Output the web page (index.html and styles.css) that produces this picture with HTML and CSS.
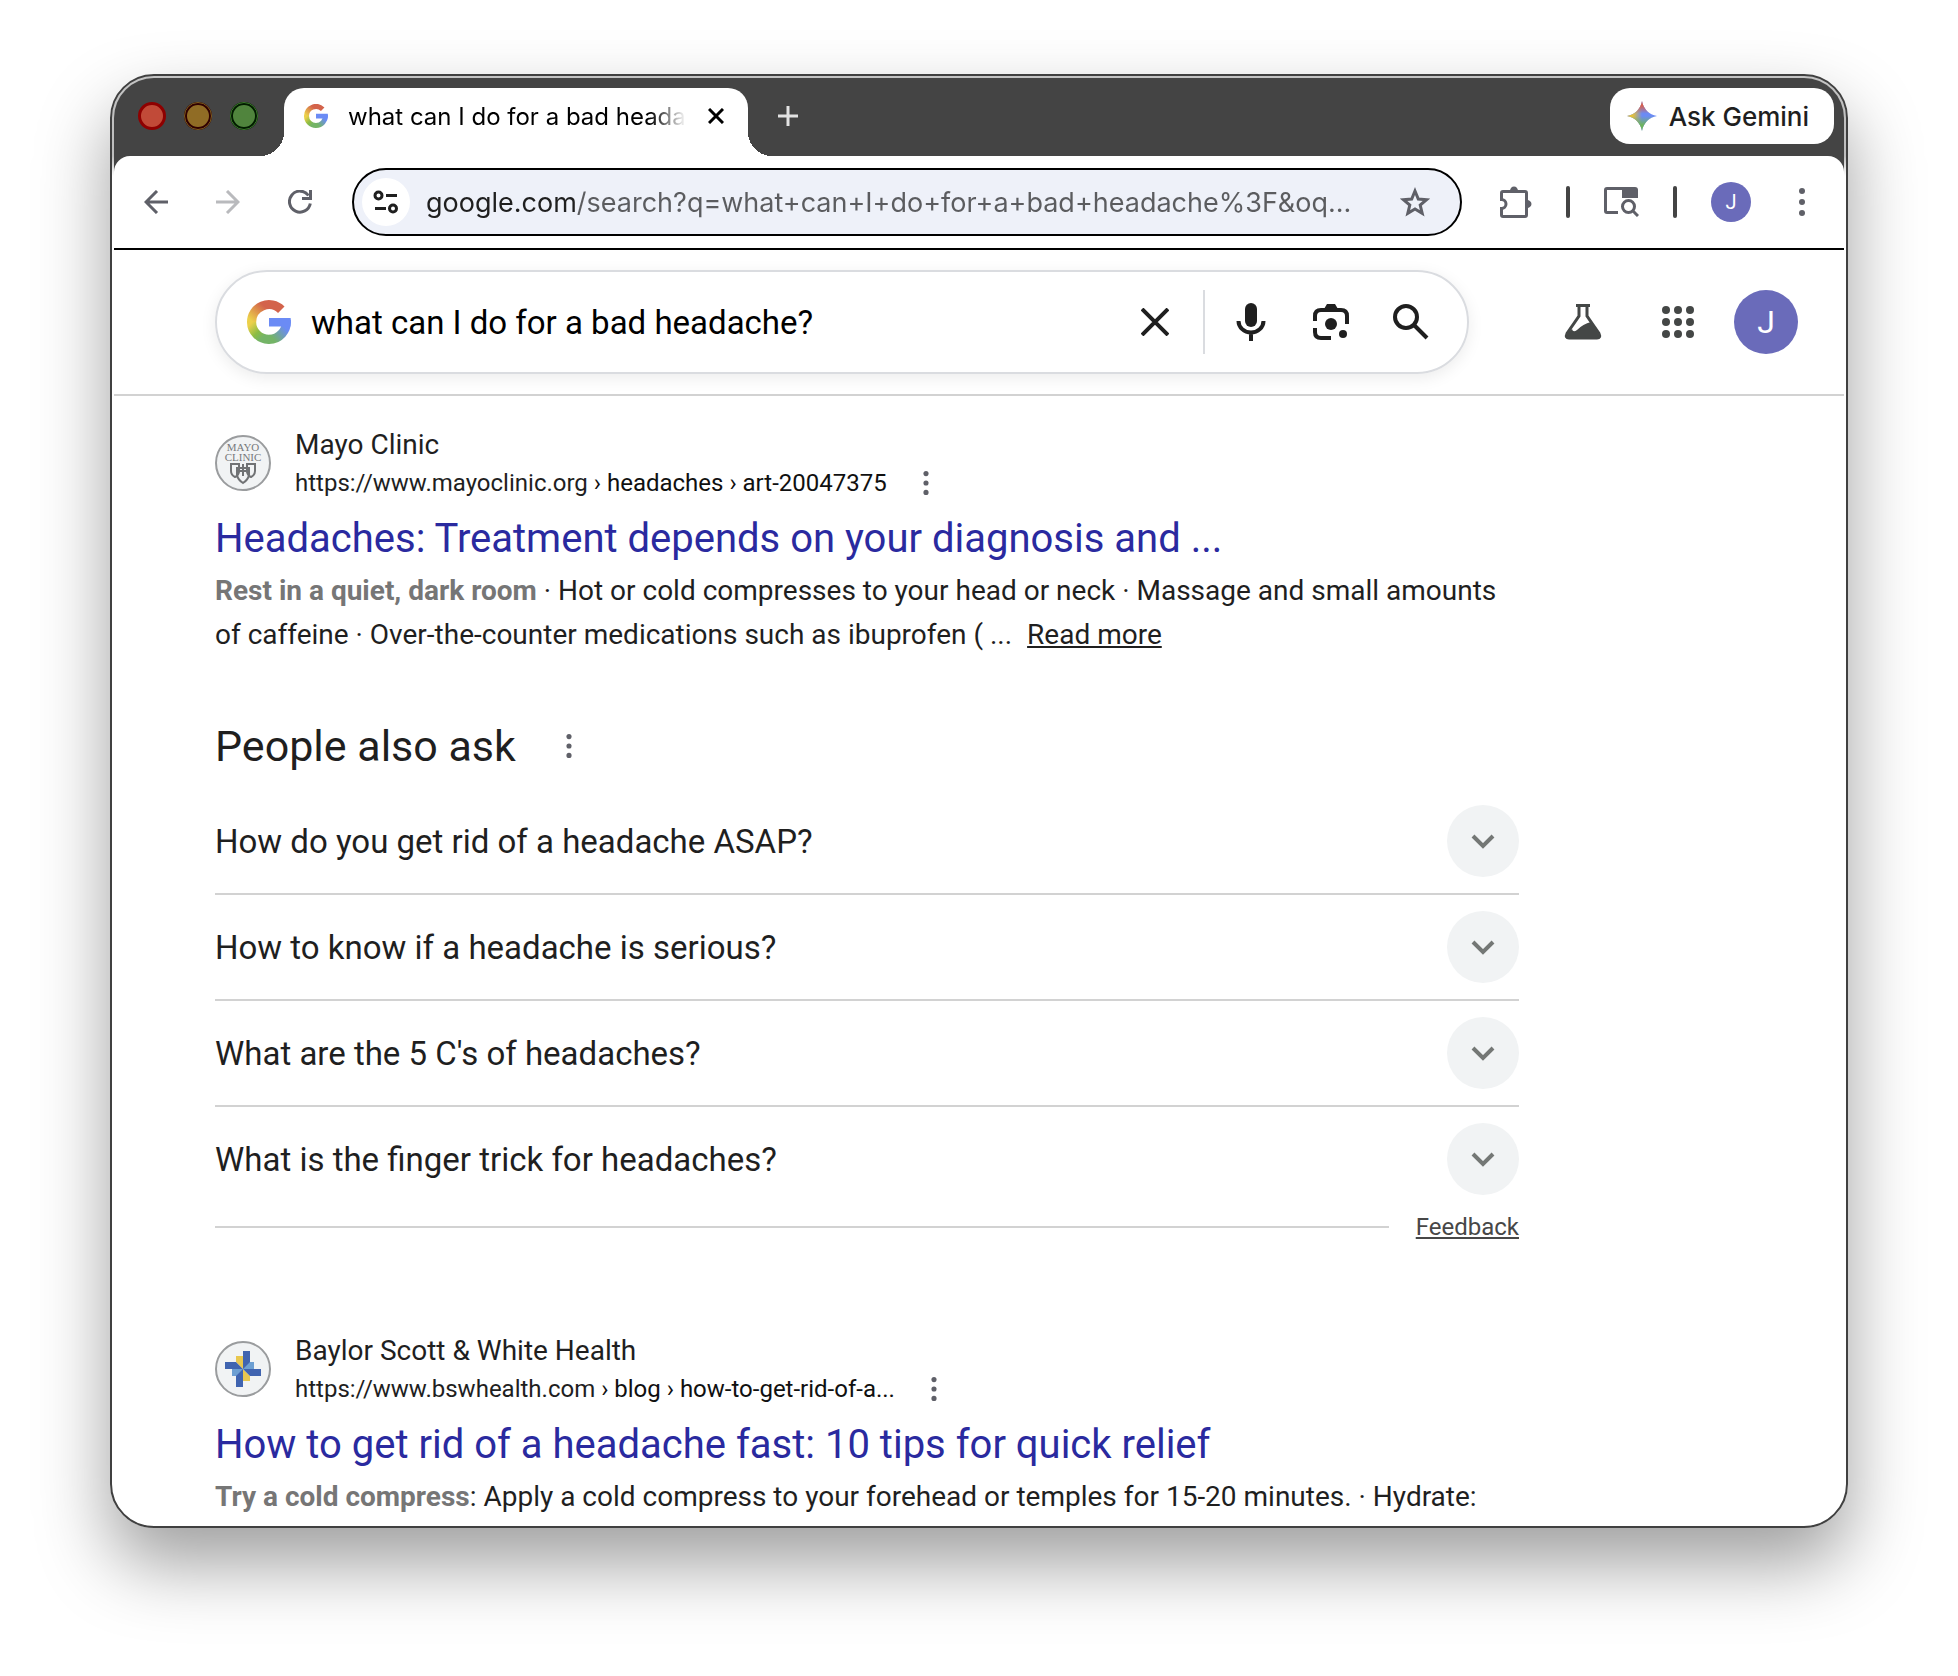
FILE: index.html
```html
<!DOCTYPE html>
<html lang="en">
<head>
    <meta charset="UTF-8">
    <meta name="viewport" content="width=device-width, initial-scale=1.0">
    <title>what can I do for a bad headache? - Google Search</title>
    <link rel="stylesheet" href="styles.css">
</head>
<body>

    <!-- shared shapes -->
    <svg class="defs" width="0" height="0" aria-hidden="true">
        <defs>
            <linearGradient id="gTop" gradientUnits="userSpaceOnUse" x1="2" y1="11" x2="9" y2="3">
                <stop offset="0" stop-color="#ecd04a"/>
                <stop offset="1" stop-color="#d3634b"/>
            </linearGradient>
            <linearGradient id="gLeft" gradientUnits="userSpaceOnUse" x1="2" y1="13" x2="9" y2="20">
                <stop offset="0" stop-color="#ecd04a"/>
                <stop offset="0.6" stop-color="#8cbc44"/>
                <stop offset="1" stop-color="#74b467"/>
            </linearGradient>
            <linearGradient id="gRight" gradientUnits="userSpaceOnUse" x1="14" y1="21" x2="21" y2="15">
                <stop offset="0" stop-color="#74b467"/>
                <stop offset="1" stop-color="#6b8bf5"/>
            </linearGradient>
            <linearGradient id="sTop" x1="0" y1="0" x2="0" y2="1">
                <stop offset="0.15" stop-color="#d9604c"/>
                <stop offset="0.42" stop-color="#d9604c" stop-opacity="0"/>
            </linearGradient>
            <linearGradient id="sLeft" x1="0" y1="0" x2="1" y2="0">
                <stop offset="0.2" stop-color="#e3bf3c"/>
                <stop offset="0.5" stop-color="#e3bf3c" stop-opacity="0"/>
            </linearGradient>
            <linearGradient id="sBottom" x1="0" y1="1" x2="0" y2="0">
                <stop offset="0.2" stop-color="#6db45c"/>
                <stop offset="0.5" stop-color="#6db45c" stop-opacity="0"/>
            </linearGradient>
            <path id="spark" d="M15 0C16.5 8 22 13.5 30 15C22 16.5 16.5 22 15 30C13.5 22 8 16.5 0 15C8 13.5 13.5 8 15 0z"/>
            <symbol id="google" viewBox="0 0 24 24">
                <g fill="none" stroke-width="5">
                    <path stroke="url(#gLeft)" d="M2.5 11.8A9.5 9.5 0 0 0 12.2 21.5"/>
                    <path stroke="url(#gTop)" d="M18.7 5.3A9.5 9.5 0 0 0 2.5 12"/>
                    <path stroke="url(#gRight)" d="M12 21.5A9.5 9.5 0 0 0 21.4 11"/>
                </g>
                <path fill="#6b8bf5" d="M12 9.8h11.8l.1 2.2-.3 2.4H12z"/>
            </symbol>
            <symbol id="dots" viewBox="0 0 6 28">
                <circle cx="3" cy="3" r="3"/>
                <circle cx="3" cy="14" r="3"/>
                <circle cx="3" cy="25" r="3"/>
            </symbol>
            <symbol id="chevron" viewBox="0 0 24 24">
                <path d="M2 7l10 10L22 7" fill="none" stroke="currentColor" stroke-width="4"/>
            </symbol>
        </defs>
    </svg>

    <div class="window">
        <header class="chrome">
            <div class="tabs">
                <div class="lights">
                    <span class="light red"></span>
                    <span class="light yellow"></span>
                    <span class="light green"></span>
                </div>
                <div class="tab">
                    <svg class="tab-icon"><use href="#google"/></svg>
                    <span class="tab-title">what can I do for a bad headache?</span>
                    <button class="plain" type="button" aria-label="Close tab">
                        <svg width="16" height="16" viewBox="0 0 16 16"><path d="M1 1l14 14M15 1L1 15" stroke="#000" stroke-width="3"/></svg>
                    </button>
                </div>
                <button class="plain new-tab" type="button" aria-label="New tab">
                    <svg width="20" height="20" viewBox="0 0 20 20"><path d="M10 0v20M0 10h20" stroke="#e3e3e3" stroke-width="3"/></svg>
                </button>
                <button class="gemini" type="button">
                    <svg width="30" height="30" viewBox="0 0 30 30">
                        <use href="#spark" fill="#6b8bf5"/>
                        <use href="#spark" fill="url(#sLeft)"/>
                        <use href="#spark" fill="url(#sBottom)"/>
                        <use href="#spark" fill="url(#sTop)"/>
                    </svg>
                    Ask Gemini
                </button>
            </div>

            <div class="toolbar">
                <div class="nav">
                    <button class="plain" type="button" aria-label="Back">
                        <svg width="24" height="24" viewBox="0 0 24 24"><path d="M24 12H2M13 1L2 12l11 11" fill="none" stroke="#5f6068" stroke-width="3"/></svg>
                    </button>
                    <button class="plain" type="button" aria-label="Forward">
                        <svg width="24" height="24" viewBox="0 0 24 24"><path d="M0 12h22M11 1l11 11-11 11" fill="none" stroke="#b9babd" stroke-width="3"/></svg>
                    </button>
                    <button class="plain" type="button" aria-label="Reload">
                        <svg width="24" height="24" viewBox="0 0 24 24"><path d="M22.3 13.5A10.5 10.5 0 1 1 20.5 5.5M22.5 0v8.5H14" fill="none" stroke="#5f6068" stroke-width="3"/></svg>
                    </button>
                </div>
                <div class="omnibox">
                    <button class="site-info" type="button" aria-label="View site information">
                        <svg width="26" height="24" viewBox="0 0 26 24" fill="none" stroke="#1f1f1f" stroke-width="3"><circle cx="5.5" cy="5.5" r="3.5"/><path d="M13 5.5h11M2 18.5h11"/><circle cx="20" cy="18.5" r="3.5"/></svg>
                    </button>
                    <input class="url" type="text" aria-label="Address" value="google.com/search?q=what+can+I+do+for+a+bad+headache%3F&amp;oq...">
                    <button class="plain" type="button" aria-label="Bookmark this tab">
                        <svg width="30" height="30" viewBox="0 0 30 30"><path d="M15 4l3.3 8 8.2.7-6.300 5.400 2 8.200L15 22l-7.200 4.300 2-8.200-6.300-5.400 8.200-.7z" fill="none" stroke="#5f6068" stroke-width="3"/></svg>
                    </button>
                </div>
                <div class="tools">
                    <button class="plain" type="button" aria-label="Extensions">
                        <svg width="32" height="32" viewBox="0 0 32 32"><path d="M1.5 13.5V7q0-1.5 1.5-1.5h22q1.5 0 1.5 1.5v22q0 1.5-1.5 1.5H3q-1.500 0-1.500-1.500v-6.500a4.500 4.500 0 0 0 0-9z" fill="none" stroke="#5f6068" stroke-width="3"/><path d="M10 5a4 4.500 0 0 1 8 0zM27 14a4.500 4 0 0 1 0 8z" fill="#5f6068"/></svg>
                    </button>
                    <span class="bar"></span>
                    <button class="plain" type="button" aria-label="Search tabs">
                        <svg width="35" height="30" viewBox="0 0 35 30"><path d="M14 25.5H3q-1.500 0-1.500-1.500V3q0-1.500 1.500-1.500h28" fill="none" stroke="#5f6068" stroke-width="3"/><path d="M18 0h13q3 0 3 3v8H18z" fill="#5f6068"/><circle cx="24.5" cy="19.5" r="6" fill="none" stroke="#5f6068" stroke-width="3"/><path d="M28.5 23.5l5.500 5.500" stroke="#5f6068" stroke-width="3"/></svg>
                    </button>
                    <span class="bar"></span>
                    <button class="avatar small" type="button" aria-label="Profile">J</button>
                    <button class="plain menu" type="button" aria-label="Menu">
                        <svg class="dots"><use href="#dots"/></svg>
                    </button>
                </div>
            </div>
        </header>

        <div class="search-header">
            <form class="search" onsubmit="return false">
                <svg class="search-logo"><use href="#google"/></svg>
                <input class="query" type="text" aria-label="Search" value="what can I do for a bad headache?">
                <button class="plain" type="button" aria-label="Clear">
                    <svg width="28" height="28" viewBox="0 0 28 28"><path d="M1 1l26 26M27 1L1 27" stroke="#1f1f1f" stroke-width="4"/></svg>
                </button>
                <span class="divider"></span>
                <button class="plain" type="button" aria-label="Search by voice">
                    <svg width="36" height="38" viewBox="-4 0 36 38"><rect x="8" y="0" width="12" height="24" rx="6" fill="#1f1f1f"/><path d="M1.5 18a12.5 11.5 0 0 0 25 0M14 29v9" fill="none" stroke="#1f1f1f" stroke-width="4"/></svg>
                </button>
                <button class="plain" type="button" aria-label="Search by image">
                    <svg width="36" height="36" viewBox="0 0 36 36"><path d="M2 17v-5q0-6 6-6h20q6 0 6 6v8M2 24v4q0 6 6 6h10" fill="none" stroke="#1f1f1f" stroke-width="4"/><path d="M11 5l3-5h8l3 5z" fill="#1f1f1f"/><circle cx="18" cy="20" r="6" fill="#1f1f1f"/><circle cx="30" cy="30" r="4" fill="#1f1f1f"/></svg>
                </button>
                <button class="plain" type="submit" aria-label="Search">
                    <svg width="36" height="36" viewBox="0 0 36 36"><circle cx="13" cy="13" r="11" fill="none" stroke="#1f1f1f" stroke-width="4"/><path d="M21 21l13 13" stroke="#1f1f1f" stroke-width="4"/></svg>
                </button>
            </form>
            <div class="account">
                <button class="plain" type="button" aria-label="Search Labs">
                    <svg width="38" height="36" viewBox="0 0 38 36"><path d="M12 1.5h14M15 2v10L3 29.5Q1 34 5 34h28q4 0 2-4.500L23 12V2" fill="none" stroke="#444746" stroke-width="3"/><path d="M3 29l5-4q1 4 5 1 6-6 14-8l9 12q1 4-3 4H5q-4 0-2-5z" fill="#444746"/></svg>
                </button>
                <button class="plain" type="button" aria-label="Google apps">
                    <svg width="32" height="32" viewBox="0 0 32 32" fill="#444746"><circle cx="4" cy="4" r="4"/><circle cx="16" cy="4" r="4"/><circle cx="28" cy="4" r="4"/><circle cx="4" cy="16" r="4"/><circle cx="16" cy="16" r="4"/><circle cx="28" cy="16" r="4"/><circle cx="4" cy="28" r="4"/><circle cx="16" cy="28" r="4"/><circle cx="28" cy="28" r="4"/></svg>
                </button>
                <button class="avatar" type="button" aria-label="Google account">J</button>
            </div>
        </div>

        <main class="results">
            <article class="result">
                <div class="source">
                    <svg class="favicon" viewBox="0 0 56 56">
                        <circle cx="28" cy="28" r="27" fill="#f1f3f4" stroke="#9a9c9e" stroke-width="2"/>
                        <g font-family="Liberation Serif, serif" font-size="11" fill="#77797b" text-anchor="middle">
                            <text x="28" y="16">MAYO</text>
                            <text x="28" y="26">CLINIC</text>
                        </g>
                        <path d="M16 29h8v8q-1 4-4 5-4-2-4-6zM32 29h8v7q0 4-4 6-3-1-4-5zM22 33h12v7q-1 5-6 8-5-3-6-8zM28 29v12M23 36h10" fill="none" stroke="#707274" stroke-width="2"/>
                    </svg>
                    <div>
                        <div class="name">Mayo Clinic</div>
                        <div class="path"><cite>https://www.mayoclinic.org<b> › headaches › art-20047375</b></cite>
                            <button class="plain" type="button" aria-label="About this result"><svg class="dots mini"><use href="#dots"/></svg></button>
                        </div>
                    </div>
                </div>
                <h3><a href="#">Headaches: Treatment depends on your diagnosis and ...</a></h3>
                <p><em>Rest in a quiet, dark room</em> · Hot or cold compresses to your head or neck · Massage and small amounts of caffeine · Over-the-counter medications such as ibuprofen ( ... <a class="more" href="#">Read more</a></p>
            </article>

            <section class="ask">
                <div class="ask-head">
                    <h2>People also ask</h2>
                    <button class="plain" type="button" aria-label="About these questions"><svg class="dots mini"><use href="#dots"/></svg></button>
                </div>
                <button class="question" type="button">How do you get rid of a headache ASAP?<span class="toggle"><svg><use href="#chevron"/></svg></span></button>
                <button class="question" type="button">How to know if a headache is serious?<span class="toggle"><svg><use href="#chevron"/></svg></span></button>
                <button class="question" type="button">What are the 5 C's of headaches?<span class="toggle"><svg><use href="#chevron"/></svg></span></button>
                <button class="question last" type="button">What is the finger trick for headaches?<span class="toggle"><svg><use href="#chevron"/></svg></span></button>
                <div class="feedback"><a href="#">Feedback</a></div>
            </section>

            <article class="result">
                <div class="source">
                    <svg class="favicon" viewBox="0 0 56 56">
                        <circle cx="28" cy="28" r="27" fill="#f1f3f4" stroke="#9a9c9e" stroke-width="2"/>
                        <path fill="#6d9fd2" d="M28 28v-7h11v7zM28 28v7H17v-7z"/>
                        <path fill="#e8c74f" d="M28 28l-7-7v-6h7zM28 28l7 7v5h-7z"/>
                        <path fill="#4064b0" d="M28 28V10h7v11zM28 28h18v7H35zM28 28v18h-7V35zM28 28H10v-7h11z"/>
                    </svg>
                    <div>
                        <div class="name">Baylor Scott &amp; White Health</div>
                        <div class="path"><cite>https://www.bswhealth.com<b> › blog › how-to-get-rid-of-a...</b></cite>
                            <button class="plain" type="button" aria-label="About this result"><svg class="dots mini"><use href="#dots"/></svg></button>
                        </div>
                    </div>
                </div>
                <h3><a href="#">How to get rid of a headache fast: 10 tips for quick relief</a></h3>
                <p><em>Try a cold compress</em>: Apply a cold compress to your forehead or temples for 15-20 minutes. · Hydrate:</p>
            </article>
        </main>
    </div>

</body>
</html>
```

FILE: styles.css
```css
* {
    box-sizing: border-box;
}
body {
    margin: 0;
    padding: 74px 110px 146px;
    background: #fff;
    color: #1f1f1f;
    font-family: Roboto, Arial, sans-serif;
    font-size: 28px;
}
button, input {
    font: inherit;
    color: inherit;
    border: 0;
    padding: 0;
    background: none;
}
svg {
    display: block;
    flex: none;
}
.defs {
    position: absolute;
}
.plain {
    display: flex;
    flex: none;
    cursor: pointer;
}

/* window frame */
.window {
    border: 2px solid #404040;
    border-radius: 44px;
    padding: 2px;
    background: linear-gradient(#c4c4c4, #bdbdbd 80px, #fff 100px);
    box-shadow: 0 36px 72px rgba(0, 0, 0, 0.38);
    overflow: hidden;
}
.chrome {
    background: #444;
    border-radius: 40px 40px 0 0;
    font-family: Inter, sans-serif;
}
.tabs {
    display: flex;
    align-items: center;
    height: 78px;
    padding: 10px 10px 0 24px;
}
.lights {
    display: flex;
    gap: 18px;
    width: 146px;
    margin-bottom: 12px;
}
.light {
    width: 28px;
    height: 28px;
    border-radius: 50%;
    border: 3px solid;
}
.red {
    background: #c14a38;
    border-color: #8e0000;
}
.yellow {
    background: #906c25;
    border-color: #300000;
    outline: 1px solid #7d5c1f;
    outline-offset: -1px;
}
.green {
    background: #50843d;
    border-color: #021c00;
    outline: 1px solid #3d7a2c;
    outline-offset: -1px;
}
.tab {
    position: relative;
    display: flex;
    align-items: center;
    align-self: stretch;
    width: 464px;
    padding: 0 24px 12px 20px;
    background: #fff;
    color: #000;
    border-radius: 20px 20px 0 0;
    font-size: 24px;
}
.tab::before, .tab::after {
    content: "";
    position: absolute;
    bottom: 0;
    width: 24px;
    height: 24px;
}
.tab::before {
    left: -24px;
    background: radial-gradient(circle at 0 0, transparent 24px, #fff 24px);
}
.tab::after {
    right: -24px;
    background: radial-gradient(circle at 100% 0, transparent 24px, #fff 24px);
}
.tab-icon {
    width: 24px;
    height: 24px;
    margin-right: 20px;
}
.tab-title {
    flex: 1;
    margin-right: 22px;
    overflow: hidden;
    white-space: nowrap;
    -webkit-mask-image: linear-gradient(to left, transparent, #000 36px);
    mask-image: linear-gradient(to left, transparent, #000 36px);
}
.new-tab {
    margin: 0 auto 12px 30px;
}
.gemini {
    display: flex;
    align-items: center;
    gap: 12px;
    height: 56px;
    margin-bottom: 12px;
    padding: 0 25px 0 17px;
    border-radius: 20px;
    background: #fff;
    font-size: 26px;
    font-weight: 500;
    cursor: pointer;
}

/* toolbar */
.toolbar {
    display: flex;
    align-items: center;
    height: 94px;
    background: #fff;
    border-radius: 16px 16px 0 0;
    border-bottom: 2px solid #000;
    padding: 0 39px 0 30px;
}
.nav {
    display: flex;
    gap: 48px;
    margin-right: 40px;
}
.omnibox {
    display: flex;
    flex: 1;
    align-items: center;
    height: 68px;
    padding: 0 30px 0 8px;
    border: 2px solid #000;
    border-radius: 34px;
    background: #eef1f9;
}
.site-info {
    display: flex;
    align-items: center;
    justify-content: center;
    width: 48px;
    height: 48px;
    border-radius: 50%;
    background: #fff;
}
/* the host part is darker than the rest of the address */
.url {
    flex: 1;
    min-width: 0;
    margin: 0 16px;
    font-size: 27px;
    color: transparent;
    background: linear-gradient(to right, #1f1f1f 149px, #5b5c5f 149px);
    -webkit-background-clip: text;
    background-clip: text;
}
.tools {
    display: flex;
    align-items: center;
    gap: 34px;
    margin-left: 38px;
}
.bar {
    width: 4px;
    height: 32px;
    border-radius: 2px;
    background: #444;
}
.menu {
    margin-left: 14px;
}
.dots {
    width: 6px;
    height: 28px;
    fill: #5f6068;
}
.dots.mini {
    height: 24px;
}
.avatar {
    width: 64px;
    height: 64px;
    flex: none;
    border-radius: 50%;
    background: #6a6bba;
    color: #fff;
    font-family: Roboto, sans-serif;
    font-size: 32px;
}
.avatar.small {
    width: 40px;
    height: 40px;
    font-size: 20px;
}

/* search bar */
.search-header {
    display: flex;
    align-items: center;
    height: 146px;
    padding: 0 46px 0 101px;
    border-bottom: 2px solid #d2d2d2;
}
.search {
    display: flex;
    flex: 1;
    align-items: center;
    height: 104px;
    max-width: 1254px;
    padding: 0 38px 0 30px;
    border: 2px solid #dadce0;
    border-radius: 52px;
    box-shadow: 0 4px 16px rgba(0, 0, 0, 0.08);
    gap: 44px;
}
.search-logo {
    width: 44px;
    height: 44px;
    margin-right: -24px;
}
.query {
    flex: 1;
    min-width: 0;
    color: #000;
    font-size: 33px;
}
.divider {
    width: 2px;
    height: 64px;
    margin: 0 -16px 0 -10px;
    background: #dadce0;
}
.account {
    display: flex;
    align-items: center;
    gap: 60px;
    margin-left: auto;
}
.account .avatar {
    margin-left: -20px;
}

/* results */
.results {
    max-width: 1405px;
    padding: 29px 0 5px 101px;
}
.source {
    display: flex;
    align-items: center;
    gap: 24px;
}
.favicon {
    width: 56px;
    height: 56px;
}
.name {
    line-height: 40px;
}
.path {
    display: flex;
    align-items: center;
    gap: 36px;
    font-size: 24px;
    line-height: 36px;
}
.path cite {
    font-style: normal;
}
.path b {
    font-weight: 400;
    color: #101010;
}
h3 {
    margin: 12px 0 4px;
    font-size: 40px;
    font-weight: 400;
    line-height: 52px;
}
h3 a {
    color: #2a2a9f;
    text-decoration: none;
}
.result p {
    margin: 0;
    line-height: 44px;
}
.result em {
    font-style: normal;
    font-weight: 700;
    color: #767676;
}
.more {
    margin-left: 8px;
    color: inherit;
}
.ask {
    margin: 61px 0 88px;
}
.ask-head {
    display: flex;
    align-items: center;
    gap: 50px;
    margin-bottom: 15px;
}
h2 {
    margin: 0;
    font-size: 43px;
    font-weight: 400;
    line-height: 56px;
}
.question {
    display: flex;
    align-items: center;
    justify-content: space-between;
    width: 100%;
    height: 106px;
    border-bottom: 2px solid #d2d2d2;
    font-size: 33px;
    text-align: left;
    cursor: pointer;
}
.question.last {
    height: 104px;
    border-bottom: 0;
}
.toggle {
    display: flex;
    align-items: center;
    justify-content: center;
    width: 72px;
    height: 72px;
    border-radius: 50%;
    background: #f1f3f4;
    color: #747775;
}
.toggle svg {
    width: 24px;
    height: 24px;
}
.feedback {
    display: flex;
    align-items: center;
    gap: 27px;
    font-size: 24px;
    line-height: 32px;
}
.feedback::before {
    content: "";
    flex: 1;
    height: 2px;
    background: #d2d2d2;
}
.feedback a {
    color: #474747;
}
```
